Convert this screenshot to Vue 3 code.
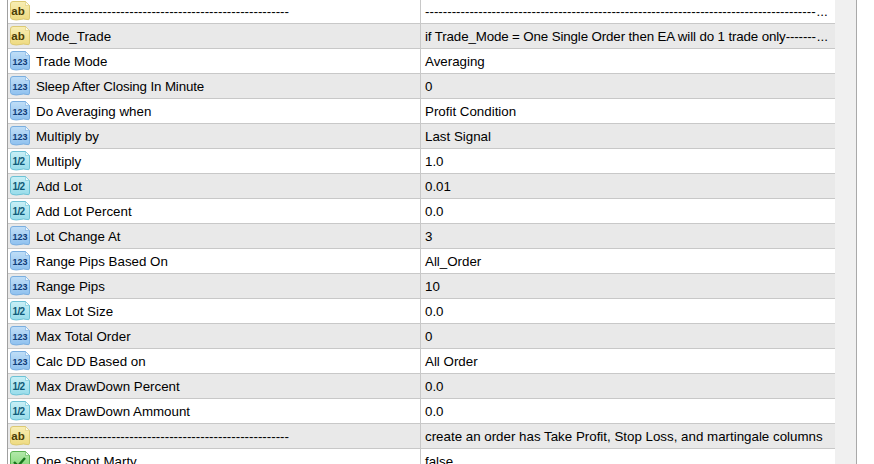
<script setup>
const rows = [
  { type: 'ab', name: '-'.repeat(57), value: '-'.repeat(88), more: true },
  { type: 'ab', name: 'Mode_Trade', value: 'if Trade_Mode = One Single Order then EA will do 1 trade only-------', more: true, tightValue: true },
  { type: 'int', name: 'Trade Mode', value: 'Averaging' },
  { type: 'int', name: 'Sleep After Closing In Minute', value: '0', tightName: true },
  { type: 'int', name: 'Do Averaging when', value: 'Profit Condition' },
  { type: 'int', name: 'Multiply by', value: 'Last Signal' },
  { type: 'dbl', name: 'Multiply', value: '1.0' },
  { type: 'dbl', name: 'Add Lot', value: '0.01' },
  { type: 'dbl', name: 'Add Lot Percent', value: '0.0' },
  { type: 'int', name: 'Lot Change At', value: '3' },
  { type: 'int', name: 'Range Pips Based On', value: 'All_Order' },
  { type: 'int', name: 'Range Pips', value: '10' },
  { type: 'dbl', name: 'Max Lot Size', value: '0.0' },
  { type: 'int', name: 'Max Total Order', value: '0' },
  { type: 'int', name: 'Calc DD Based on', value: 'All Order' },
  { type: 'dbl', name: 'Max DrawDown Percent', value: '0.0' },
  { type: 'dbl', name: 'Max DrawDown Ammount', value: '0.0' },
  { type: 'ab', name: '-'.repeat(57), value: 'create an order has Take Profit, Stop Loss, and martingale columns' },
  { type: 'bool', name: 'One Shoot Marty', value: 'false' },
]

const icons = {
  ab: { stroke: '#dcc973', ink: '#4b3d05', fold: '#fdfbe8' },
  int: { stroke: '#79aee0', ink: '#0f3c78', fold: '#eef6fd' },
  dbl: { stroke: '#6cc2d6', ink: '#0f5a78', fold: '#effbfd' },
  bool: { stroke: '#5cb354', ink: '#17751c', fold: '#eefbec' },
}
</script>

<template>
  <div class="window">
    <svg class="defs" width="0" height="0">
      <defs>
        <linearGradient id="fill-ab" x1="0" y1="0" x2="0" y2="1">
          <stop offset="0" stop-color="#f8eeb4" />
          <stop offset="1" stop-color="#eeda80" />
        </linearGradient>
        <linearGradient id="fill-int" x1="0" y1="0" x2="0" y2="1">
          <stop offset="0" stop-color="#c0def7" />
          <stop offset="1" stop-color="#8fc1ef" />
        </linearGradient>
        <linearGradient id="fill-dbl" x1="0" y1="0" x2="0" y2="1">
          <stop offset="0" stop-color="#c8eff6" />
          <stop offset="1" stop-color="#97dcea" />
        </linearGradient>
        <linearGradient id="fill-bool" x1="0" y1="0" x2="0" y2="1">
          <stop offset="0" stop-color="#b4e9ab" />
          <stop offset="1" stop-color="#7ed572" />
        </linearGradient>
      </defs>
    </svg>
    <div class="grid">
      <div v-for="(row, i) in rows" :key="i" class="row" :class="{ alt: i % 2 === 1 }">
        <div class="name-cell">
          <svg class="icon" width="20" height="20" viewBox="0 0 20 20">
            <path
              d="M0.5 3 Q0.5 0.5 3 0.5 H15.5 L19.5 4.5 V17 Q19.5 19.5 17 18.5 Q13.5 17.5 10 18.5 Q6 19.5 3 18.5 Q0.5 18 0.5 16.5 Z"
              :fill="`url(#fill-${row.type})`"
              :stroke="icons[row.type].stroke"
            />
            <path d="M15.5 0.5 V4.5 H19.5 Z" :fill="icons[row.type].fold" :stroke="icons[row.type].stroke" stroke-width="0.6" />
            <text v-if="row.type === 'ab'" class="glyph" x="8" y="13.5" font-size="11.5" :fill="icons.ab.ink">ab</text>
            <text v-else-if="row.type === 'int'" class="glyph" x="10" y="14" font-size="9" :fill="icons.int.ink">123</text>
            <text v-else-if="row.type === 'dbl'" class="glyph half" x="8.5" y="13.5" font-size="10" :fill="icons.dbl.ink">1/2</text>
            <path v-else d="M4 11 L8 15 L15 7" fill="none" stroke="#17751c" stroke-width="2.4" />
          </svg>
          <span class="text" :class="{ tight: row.tightName }">{{ row.name }}</span>
        </div>
        <div class="value-cell">
          <span class="text" :class="{ tight: row.tightValue }">{{ row.value }}</span>
          <span v-if="row.more" class="more">...</span>
        </div>
      </div>
    </div>
    <div class="gutter"></div>
    <div class="rest"></div>
  </div>
</template>

<style scoped>
.window {
  width: 874px;
  height: 464px;
  overflow: hidden;
  display: flex;
  background: #fff;
  font-family: "Liberation Sans", Arial, sans-serif;
  font-size: 13.33px;
  color: #000;
}

.defs {
  flex: none;
}

.grid {
  width: 828px;
  margin-left: 7px;
  margin-top: -1px;
  border-left: 1px solid #a0a0a0;
  box-sizing: border-box;
  flex: none;
}

.row {
  height: 25px;
  box-sizing: border-box;
  display: flex;
  border-bottom: 1px solid #c8c8c8;
  background: #fff;
}

.row.alt {
  background: #e9e9e9;
}

.name-cell {
  width: 413px;
  flex: none;
  box-sizing: border-box;
  display: flex;
  align-items: center;
  padding-left: 2px;
  border-right: 1px solid #c8c8c8;
}

.icon {
  flex: none;
  margin-right: 6px;
}

.glyph {
  font-family: "Liberation Sans", Arial, sans-serif;
  font-weight: 700;
  text-anchor: middle;
}

.glyph.half {
  letter-spacing: -0.6px;
}

.value-cell {
  flex: 1;
  display: flex;
  align-items: center;
  padding-left: 4px;
  overflow: hidden;
  white-space: nowrap;
}

.text {
  white-space: nowrap;
}

.tight {
  letter-spacing: -0.13px;
}

.more {
  margin-left: 1px;
}

.gutter {
  width: 22px;
  flex: none;
  box-sizing: border-box;
  background: #f0f0f0;
  border-right: 1px solid #a9a9a9;
}

.rest {
  flex: 1;
  background: #fff;
}
</style>
